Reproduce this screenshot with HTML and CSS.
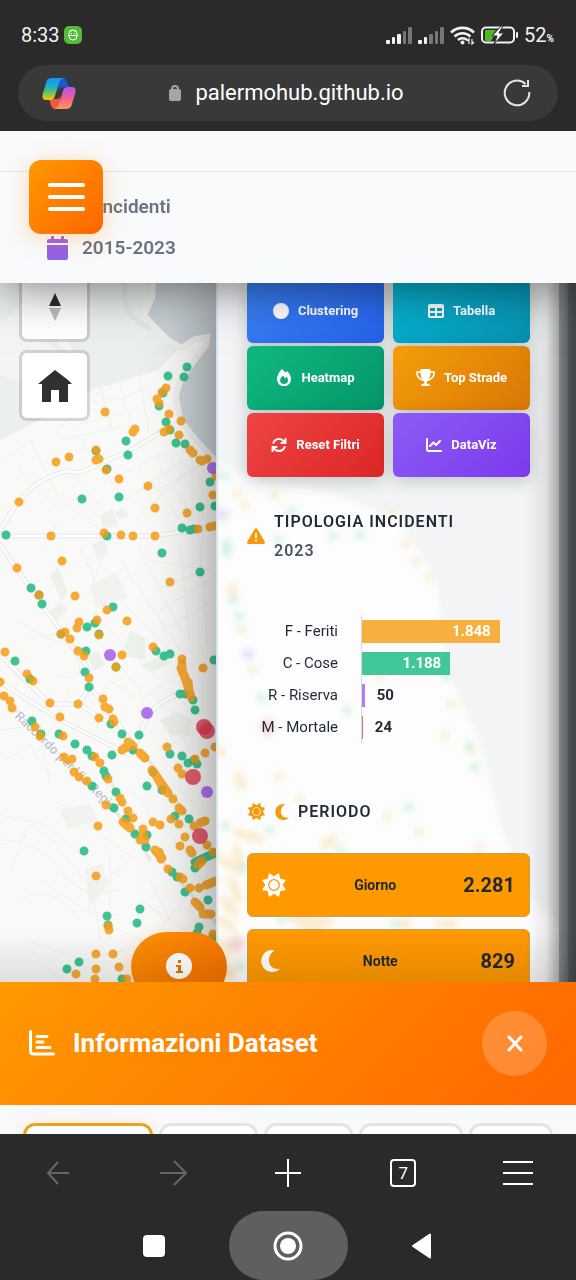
FILE: index.html
```html
<!DOCTYPE html>
<html lang="it">
<head>
<meta charset="utf-8">
<meta name="viewport" content="width=device-width, initial-scale=1">
<title>Palermo Hub - Incidenti</title>
<link rel="stylesheet" href="styles.css">
</head>
<body>
<div class="phone">
  <div class="browser-top">
    <div class="status">
      <span class="clock">8:33</span>
      <svg class="badge-app" width="18" height="18" viewBox="0 0 18 18"><rect width="18" height="18" rx="5" fill="#53bd3a"/><path d="M5 8a4 4 0 0 1 8 0v2a4 4 0 0 1-8 0zM4 9.500h10M6 4l1 1.500M12 4l-1 1.500M7 7.500h1M10 7.500h1" fill="none" stroke="#fff" stroke-width="1"/></svg>
      <span class="spacer"></span>
      <svg width="26" height="17" viewBox="0 0 26 17"><g fill="#f2f2f2"><rect y="13" width="4" height="4" rx="1"/><rect x="6" y="10" width="3" height="7" rx="1"/><rect x="11" y="7" width="4" height="10" rx="1"/></g><g fill="#777"><rect x="17" y="4" width="3" height="13" rx="1"/><rect x="22" width="4" height="17" rx="1"/></g></svg>
      <svg width="26" height="17" viewBox="0 0 26 17"><g fill="#f2f2f2"><rect y="13" width="4" height="4" rx="1"/><rect x="6" y="10" width="3" height="7" rx="1"/></g><g fill="#777"><rect x="11" y="7" width="4" height="10" rx="1"/><rect x="17" y="4" width="3" height="13" rx="1"/><rect x="22" width="4" height="17" rx="1"/></g></svg>
      <svg width="25" height="19" viewBox="0 0 25 19"><g fill="none" stroke="#f2f2f2" stroke-width="2.600"><path d="M1 6.500a16.500 16.500 0 0 1 23 0"/><path d="M4.500 10.500a11.500 11.500 0 0 1 16 0"/><path d="M8 14a6.500 6.500 0 0 1 9 0"/></g><circle cx="12.500" cy="16.500" r="2" fill="#f2f2f2"/><path d="M19 18v-5l-2 2M22 13v5l2-2" stroke="#f2f2f2" stroke-width="1.200" fill="none"/></svg>
      <svg width="37" height="18" viewBox="0 0 37 18"><rect x="1" y="1.500" width="32" height="15" rx="4" fill="none" stroke="#f2f2f2" stroke-width="2"/><path d="M5 4h10l-4 6h2l-3 5H5a1 1 0 0 1-1-1V5a1 1 0 0 1 1-1z" fill="#50b820"/><path d="M20 0l-9 10h5l-3 8 10-11h-5l4-7z" fill="#f2f2f2" stroke="#2a2a2a"/><rect x="35" y="6" width="2" height="6" rx="1" fill="#f2f2f2"/></svg>
      <span class="battery">52<small>%</small></span>
    </div>
    <div class="address">
      <svg width="34" height="31" viewBox="0 0 34 31">
        <defs>
          <linearGradient id="ca" x1="0" y1="0" x2="0" y2="1"><stop offset="0" stop-color="#1795ef"/><stop offset=".4" stop-color="#1db0c8"/><stop offset=".7" stop-color="#75c45c"/><stop offset="1" stop-color="#ffc400"/></linearGradient>
          <linearGradient id="cb" x1="0" y1="0" x2="0" y2="1"><stop offset="0" stop-color="#a95cf5"/><stop offset=".45" stop-color="#ee5aa0"/><stop offset="1" stop-color="#ff9a55"/></linearGradient>
        </defs>
        <path d="M15 0h6q3 0 4 4l2 5h-6q-3 0-4 4z" fill="#1b55d8"/>
        <path d="M19 31h-6q-3 0-4-4l-2-6h8q3 0 3-4z" fill="#ef5a3c"/>
        <path d="M10 0h12q-4 1-5 5l-4 13q-1 4-5 4H4q-5 0-3-7L4 5q1-5 6-5z" fill="url(#ca)"/>
        <path d="M24 31H12q4-1 5-5l4-13q1-4 5-4h4q5 0 3 7l-3 10q-1 5-6 5z" fill="url(#cb)"/>
      </svg>
      <div class="url">
        <svg width="12" height="16" viewBox="0 0 12 16"><path d="M3 6V4a3 3 0 0 1 6 0v2" fill="none" stroke="#a5a5a5" stroke-width="2"/><rect y="4" width="12" height="12" rx="2" fill="#a5a5a5"/></svg>
        <span>palermohub.github.io</span>
      </div>
      <button class="plain" aria-label="Ricarica"><svg width="28" height="28" viewBox="0 0 28 28" fill="none" stroke="#e6e6e6" stroke-width="2"><path d="M22.500 5A12.300 12.300 0 1 0 26.300 13M25 1v6h-6"/></svg></button>
    </div>
  </div>

  <header class="page-head">
    <div class="strip"></div>
    <div class="stats">
      <div class="stat stat-count">Incidenti</div>
      <div class="stat">
        <svg width="21" height="24" viewBox="0 0 21 24" fill="#9360e8"><path d="M0 7V5a2 2 0 0 1 2-2h2V1q0-1 1-1h1q1 0 1 1v2h7V1q0-1 1-1h1q1 0 1 1v2h2a2 2 0 0 1 2 2v2zM0 9h21v13a2 2 0 0 1-2 2H2a2 2 0 0 1-2-2z"/></svg>
        2015-2023
      </div>
    </div>
    <button class="menu" aria-label="Menu"><i></i><i></i><i></i></button>
  </header>

  <main class="stage">
    <svg class="map" viewBox="0 283 576 699" preserveAspectRatio="xMinYMin slice" fill="none" stroke-linecap="round">
      <rect y="283" width="576" height="699" fill="#f9faf8"/>
      <path d="M0 283H153L151 315 150 322 180 348 158 370 120 382 90 390 70 405 0 440Z" fill="#ebf0ec"/>
      <path d="M0 325l22-20 10 30 25 15-20 40L0 375zM40 290l20 55 20 20" fill="#f4f5f2"/>
      <path d="M125 283q-4 35 25 45" stroke="#e3e9e4" stroke-width="5"/>
      <path d="M153 283L152 298 144 315 150 322 168 340 182 348 195 339 207 337 206 345 196 358 186 372 179 384 176 396 180 420 196 440 217 462 260 480 330 492 400 520 437 580 447 670 480 740 500 820 522 890 576 940V283Z" fill="#cbd3d8"/>
      <path d="M153 283L152 298 144 315 150 322 168 340 182 348 195 339 207 337 206 345 196 358 186 372 179 384 176 396 180 420 196 440 217 462" stroke="#f1f1ef" stroke-width="6"/>
      <g fill="#edf1eb"><path d="M100 515l12-6 6 14-14 7zM115 512l8-4 6 7-10 4zM130 630l15 8 1 22-25-4zM88 655l10-4 7 14-12 6zM140 665l20-8 12 5-20 10zM160 720l18-8 14 8-2 16-20-1zM50 575l8-8 10 25-6 9zM92 545l12-6 4 13-10 8zM48 612l12-9 8 7-12 10z"/></g>
      <g fill="#f2f2f1"><path d="M90 585l26-13 12 25-32 12zM85 870l16-6 8 20-20 24zM60 810l30-6 8 16-30 10z"/></g>
      <g stroke="#eff0f0" stroke-width="1">
        <path d="M90 390l26 10 30-12M100 385l12 45M120 382l10 40M75 425l50-12M60 440l70-15M140 380l8 50M95 400l-40 30M30 440l30 60 40 30M60 460l60 70M80 440l45 60M110 480l60-30M125 500l60-40M140 515l55-50M150 480l30 40M160 470l30 40M170 460l30 40M150 495l50-30"/>
        <path d="M20 470l40 40 20-15 25 30M0 460l35-20M60 520l-20 30M80 550l20 40M110 540l-20 50M120 560l60 90M140 550l40 80M150 560l60 10M155 590l50-20M160 610l50-30M165 630l50-30M180 550l10 90M200 545l8 100M120 600l60 60M100 620l60 60M90 630l50 60M20 620q20 20 50 25t60 50M30 640q30-15 45 15t-20 20M140 700l60-40M150 690l40 40M160 750l60-30M100 700l50 60M110 680l40 30M70 690l-30 60M0 730l40-5 10 60M5 760l25-15 20 30"/>
        <path d="M0 840q40 0 60 30t60 20M10 870l20-45 30 20M40 880l60 40 40 20M20 900q30-20 60 20M60 850l40 50M70 910l50 5M90 870l10 70M110 850v90M130 860l-40 30M25 940l60 20 40-10M30 950l30 30M150 880l20 40M160 930l40-50M140 900l60 40M170 860l40 60M0 815l50 10 60 60"/>
        <path d="M55 800l80 60M140 770l50 50M150 760l50 50M160 745l50 50M130 790l70 80M180 730l30 70"/>
      </g>
      <g stroke="#e8e9e9" stroke-width="5"><path d="M0 536H155L217 526M0 530L18 502Q40 475 70 471 80 476 100 463L127 452 165 430M0 545L60 630 88 668 92 690 115 720 145 760M0 682L60 720 130 755M78 704L50 704 0 655M78 704L88 690M79 704L110 724M133 750L140 735Q150 700 185 693"/></g>
      <g stroke="#fcfcfb" stroke-width="3"><path d="M0 536H155L217 526M0 530L18 502Q40 475 70 471 80 476 100 463L127 452 165 430M0 545L60 630 88 668 92 690 115 720 145 760M0 682L60 720 130 755M78 704L50 704 0 655M78 704L88 690M79 704L110 724M133 750L140 735Q150 700 185 693"/></g>
      <path d="M0 694L90 785 170 870 217 925M105 770L150 860M145 755L217 860" stroke="#e8e9e9" stroke-width="3"/>
      <text class="road-label" transform="translate(14 717) rotate(44)">Raccordo per Via Regio</text>
      <g stroke-width="9" stroke-opacity=".85">
        <path stroke="#1fb980" d="M187 367h0M184 377h0M168 376h0M159 406h0M166 422h0M163 393h0M126 441h0M128 455h0M176 443h0M185 444h0M107 469h0M82 499h0M119 497h0M210 482h0M200 507h0M215 506h0M182 528h0M190 530h0M194 529h0M6 535h0M107 536h0M162 553h0M200 572h0M31 588h0M42 604h0M113 607h0M87 627h0M95 623h0M99 634h0M86 651h0M15 661h0M30 679h0M85 672h0M89 687h0M111 724h0M122 734h0M139 735h0M156 651h0M164 656h0M170 654h0M214 660h0M180 694h0M185 694h0M193 700h0M195 710h0M32 721h0M41 734h0M59 734h0M75 744h0M87 750h0M92 756h0M112 755h0M104 771h0M106 776h0M92 786h0M116 792h0M133 750h0M170 754h0M182 756h0M188 763h0M197 764h0M147 786h0M162 790h0M96 451h0M170 430h0M61 634h0M39 595h0"/>
        <path stroke="#1fb980" d="M114 808h0M126 819h0M135 834h0M147 835h0M146 847h0M84 851h0M175 816h0M189 819h0M172 872h0M177 877h0M185 892h0M195 862L215 853M195 868h0M208 900h0M140 909h0M137 923h0M107 916h0M199 927h0M79 962h0M67 969h0M122 979h0M108 925h0M197 933h0M213 937h0M153 772h0M116 667h0M194 760h0"/>
        <path stroke="#f79c14" d="M166 388h0M157 399h0M159 403h0M162 392h0M169 414h0M181 421h0M105 412h0M135 429h0M133 432h0M164 432h0M169 429h0M179 435h0M190 450h0M193 453h0M200 460h0M202 461h0M207 459h0M56 462h0M69 457h0M96 450h0M96 460h0M99 459h0M106 470h0M119 479h0M148 486h0M155 508h0M187 513h0M19 502h0M51 536h0M104 533h0M121 535h0M133 536h0M155 536h0M198 529h0M210 527h0M214 526h0M213 495h0M216 476h0M62 561h0M17 568h0M39 595h0M75 596h0M170 582h0M107 610h0M127 621h0M79 622h0M77 628h0M97 620h0M99 635h0M65 632h0M61 634h0M70 639h0M78 651h0M84 656h0M122 655h0M116 667h0M5 652h0M27 674h0M33 681h0M0 682h0M4 696h0M10 701h0M12 708h0M50 703h0M78 704h0M60 717h0M89 678h0M103 699h0M105 707h0M109 709h0M99 718h0M113 719h0M114 722h0M153 647h0M182 659h0M203 668h0"/>
        <path stroke="#f79c14" d="M181 668L186 680 191 697M188 682l1 10M182 664l0 6M35 727h0M40 736h0M63 736h0M64 757h0M68 760h0M72 759h0M74 772h0M79 777h0M87 781h0M95 757h0M100 763h0M108 779h0M122 750L131 744M128 742l5 4M140 753L145 758M152 770L168 793M157 777l8 14M173 799h0M120 798h0M167 747h0M205 753h0M215 747h0M195 759h0M178 768h0M182 774h0M122 802h0M106 805h0M128 811h0M133 818h0M123 822L130 828M143 829h0M143 834h0M140 840h0M145 840h0M98 826h0M153 822h0M160 825h0M155 850L162 858M159 852l2 7M168 869h0M183 879h0M180 877h0M190 888h0M199 888h0M96 876h0M179 808L182 811M171 819h0M179 824h0M194 826h0M200 823L205 821M185 837h0M180 846h0M190 850l2 3M207 845h0M213 852h0M198 865l4-4M206 885L216 881M195 902L200 907M203 914L211 914M108 926h0M109 930h0M96 954h0M113 954h0M96 969h0M119 967h0M76 974h0M95 979h0M127 979h0M213 934h0"/>
        <path stroke="#f79c14" d="M237 493h0M245 505h0M274 495h0M390 512h0M406 543h0M417 562h0M429 577h0M232 587l1 6M242 630h0M253 670h0M380 677h0M451 704h0M445 735h0M472 750h0M238 776l4 10M279 777h0M222 752h0M300 799h0M387 817h0M419 832h0M480 848h0M238 833l22 6M325 845l8-6M232 880l6 20M220 920l12 8M330 922l-40-6M300 925l20 4M400 924h8M440 924h14M266 855l4 10M257 813h0M222 860l14 8M224 900l10 14M236 850l6 20M226 945l8 4M222 972h10"/>
        <path stroke="#1fb980" d="M225 476h0M292 511h0M333 536h0M360 535h0M279 540h0M227 543l0 10M233 600h0M239 617h0M261 698h0M347 710h0M446 676h0M469 746h0M475 767h0M409 807h0M225 826h0M270 830h0M340 850h0M243 868h0M395 924h0M240 965h0M282 920h0"/>
      </g>
      <g fill="#a35cf0" fill-opacity=".85"><circle cx="213" cy="468" r="6"/><circle cx="110" cy="655" r="6"/><circle cx="147" cy="713" r="6"/><circle cx="207" cy="792" r="6"/><circle cx="223" cy="515" r="6"/><circle cx="248" cy="654" r="6"/></g>
      <g fill="#e23d50" fill-opacity=".82"><circle cx="204" cy="727" r="8"/><circle cx="207" cy="731" r="8"/><circle cx="193" cy="777" r="8"/><circle cx="200" cy="836" r="8"/><circle cx="268" cy="727" r="8"/><circle cx="237" cy="943" r="8"/></g>
    </svg>

    <div class="map-tools">
      <button class="tool" aria-label="Nord"><svg width="12" height="28" viewBox="0 0 12 28"><path d="M6 0l6 13H0z" fill="#2f2f2f"/><path d="M6 28l6-13H0z" fill="#bdbdbd"/></svg></button>
      <button class="tool" aria-label="Home"><svg width="34" height="32" viewBox="0 0 34 32"><path d="M17 0L0 14h4v18h9V20h8v12h9V14h4l-4-4z" fill="#303030"/></svg></button>
    </div>

    <aside class="panel">
      <div class="actions">
        <button class="act blue"><svg width="16" height="16" viewBox="0 0 16 16"><circle cx="8" cy="8" r="8" fill="#fff"/></svg>Clustering</button>
        <button class="act cyan"><svg width="16" height="16" viewBox="0 0 512 512"><path fill="#fff" d="M64 256V160H224v96H64zm0 64H224v96H64V320zm224 96V320H448v96H288zM448 256H288V160H448v96zM64 32C28.700 32 0 60.700 0 96V416c0 35.300 28.700 64 64 64H448c35.300 0 64-28.700 64-64V96c0-35.300-28.700-64-64-64H64z"/></svg>Tabella</button>
        <button class="act green"><svg width="16" height="17" viewBox="0 0 16 17"><path fill="#fff" fill-rule="evenodd" d="M6 0q2 1.500 3.500 3.700L11 2q4 4 4 8a7 7 0 0 1-14 .500Q1 5 6 0zM8 15q4 0 4-4 0-2-1.300-3.300L9.200 9.500 7 6.500Q4 9 4 11.300 4.300 15 8 15z"/></svg>Heatmap</button>
        <button class="act amber"><svg width="19" height="17" viewBox="0 0 576 512"><path fill="#fff" d="M400 0H176c-26.500 0-48.100 21.800-47.100 48.200c.2 5.300 .4 10.600 .7 15.800H24C10.700 64 0 74.700 0 88c0 92.600 33.500 157 78.500 200.700c44.300 43.100 98.300 64.800 138.100 75.800c23.400 6.500 39.400 26 39.400 45.600c0 20.900-17 37.900-37.900 37.900H192c-17.700 0-32 14.300-32 32s14.300 32 32 32H384c17.700 0 32-14.300 32-32s-14.300-32-32-32H357.900C337 448 320 431 320 410.100c0-19.600 15.900-39.200 39.400-45.600c39.900-11 93.900-32.700 138.200-75.800C542.500 245 576 180.600 576 88c0-13.300-10.700-24-24-24H446.400c.3-5.200 .5-10.400 .7-15.800C448.100 21.800 426.500 0 400 0zM48.900 112h84.400c9.100 90.100 29.200 150.300 51.900 190.600c-24.900-11-50.800-26.500-73.200-48.300c-32-31.100-58-76-63-142.300zM464.100 254.300c-22.400 21.800-48.300 37.300-73.200 48.300c22.700-40.300 42.800-100.500 51.900-190.600h84.400c-5.100 66.300-31.100 111.200-63 142.300z"/></svg>Top Strade</button>
        <button class="act red"><svg width="16" height="16" viewBox="0 0 512 512"><path fill="#fff" d="M105.100 202.600c7.700-21.800 20.200-42.300 37.800-59.800c62.500-62.500 163.800-62.500 226.300 0L386.300 160H336c-17.700 0-32 14.300-32 32s14.300 32 32 32H463.900c17.700 0 32-14.300 32-32V64c0-17.700-14.300-32-32-32s-32 14.300-32 32v51.200L414.400 97.600c-87.500-87.500-229.300-87.500-316.800 0C73.200 122 55.600 150.700 44.800 181.400c-5.900 16.700 2.900 34.900 19.500 40.800s34.900-2.900 40.800-19.500zM39 289.300c-5 1.500-9.800 4.200-13.700 8.200c-4 4-6.700 8.800-8.100 14c-.3 1.200-.6 2.500-.8 3.800c-.3 1.700-.4 3.400-.4 5.100V448c0 17.700 14.300 32 32 32s32-14.300 32-32V396.900l17.600 17.500c87.500 87.400 229.300 87.400 316.700 0c24.400-24.400 42.100-53.100 52.900-83.700c5.900-16.700-2.900-34.900-19.500-40.800s-34.900 2.900-40.800 19.500c-7.700 21.800-20.200 42.300-37.800 59.800c-62.500 62.500-163.800 62.500-226.300 0L125.600 352H176c17.700 0 32-14.300 32-32s-14.300-32-32-32H48.400c-1.600 0-3.200 .1-4.800 .3s-3.100 .5-4.600 1z"/></svg>Reset Filtri</button>
        <button class="act violet"><svg width="16" height="16" viewBox="0 0 512 512"><path fill="#fff" d="M64 64c0-17.700-14.300-32-32-32S0 46.300 0 64V400c0 44.200 35.800 80 80 80H480c17.700 0 32-14.300 32-32s-14.300-32-32-32H80c-8.800 0-16-7.200-16-16V64zm406.600 86.600c12.500-12.500 12.500-32.800 0-45.300s-32.800-12.500-45.300 0L320 210.700l-57.400-57.400c-12.500-12.500-32.800-12.500-45.300 0l-112 112c-12.500 12.500-12.500 32.800 0 45.300s32.800 12.500 45.300 0L240 221.300l57.400 57.400c12.500 12.500 32.800 12.500 45.300 0l128-128z"/></svg>DataViz</button>
      </div>

      <h2 class="title title-type">
        <svg width="18" height="18" viewBox="0 0 512 512"><path fill="#f59a0c" d="M256 32c14.200 0 27.300 7.500 34.500 19.800l216 368c7.300 12.400 7.300 27.700 .2 40.100S486.300 480 472 480H40c-14.300 0-27.600-7.700-34.700-20.100s-7-27.800 .2-40.100l216-368C228.700 39.500 241.800 32 256 32zm0 128c-13.300 0-24 10.700-24 24V296c0 13.300 10.700 24 24 24s24-10.700 24-24V184c0-13.300-10.700-24-24-24zm32 224a32 32 0 1 0 -64 0 32 32 0 1 0 64 0z"/></svg>
        <span>TIPOLOGIA INCIDENTI<br><span class="year">2023</span></span>
      </h2>

      <div class="chart">
        <div class="row"><span class="label">F - Feriti</span><div class="track"><div class="bar orange" style="width:82.1%"><b>1.848</b></div></div></div>
        <div class="row"><span class="label">C - Cose</span><div class="track"><div class="bar teal" style="width:52.8%"><b>1.188</b></div></div></div>
        <div class="row"><span class="label">R - Riserva</span><div class="track"><div class="bar purple" style="width:2.2%"></div><b>50</b></div></div>
        <div class="row"><span class="label">M - Mortale</span><div class="track"><div class="bar rose" style="width:1.1%"></div><b>24</b></div></div>
      </div>

      <h2 class="title title-period">
        <svg width="19" height="19" viewBox="0 0 24 24"><path fill="#f59a0c" fill-rule="evenodd" d="M16.600 1l1.100 5.300L23 7.400 20 12l3 4.600-5.300 1.100L16.600 23 12 20l-4.600 3-1.100-5.300L1 16.600 4 12 1 7.400l5.300-1.100L7.400 1 12 4zM12 6.500a5.500 5.500 0 1 0 0 11 5.500 5.500 0 0 0 0-11zm0 1.200a4.300 4.300 0 1 1 0 8.600 4.300 4.300 0 0 1 0-8.600z"/></svg>
        <svg width="14" height="16" viewBox="0 0 18 21"><path fill="#f59a0c" d="M10.500 0A10.500 10.500 0 1 0 18 18Q9 19 7.500 11 7 4 13 .500 12 0 10.500 0z"/></svg>
        PERIODO
      </h2>
      <div class="periods">
        <button class="period"><svg width="26" height="26" viewBox="0 0 24 24"><path fill="#fff" fill-rule="evenodd" d="M16.600 1l1.100 5.300L23 7.400 20 12l3 4.600-5.300 1.100L16.600 23 12 20l-4.600 3-1.100-5.300L1 16.600 4 12 1 7.400l5.300-1.100L7.400 1 12 4zM12 6.500a5.500 5.500 0 1 0 0 11 5.500 5.500 0 0 0 0-11zm0 1.200a4.300 4.300 0 1 1 0 8.600 4.300 4.300 0 0 1 0-8.600z"/></svg><span>Giorno</span><strong>2.281</strong></button>
        <button class="period"><svg width="19" height="22" viewBox="0 0 18 21"><path fill="#fff" d="M10.500 0A10.500 10.500 0 1 0 18 18Q9 19 7.500 11 7 4 13 .500 12 0 10.500 0z"/></svg><span>Notte</span><strong>829</strong></button>
      </div>
    </aside>
    <div class="edge"></div>
    <button class="info-pill" aria-label="Informazioni"><svg width="26" height="26" viewBox="0 0 26 26"><circle cx="13" cy="13" r="13" fill="#fff"/><path d="M12 7h3v3h-3zM10 12h5v6h2v2h-7v-2h2v-4h-2z" fill="#e87400"/></svg></button>
    <div class="shade"></div>
  </main>

  <section class="dataset">
    <h1><svg width="26" height="26" viewBox="0 0 26 26" fill="none" stroke="#fff" stroke-width="3" stroke-linecap="round"><path d="M1.500 1.500V21q0 3 3 3H24.500M8 6.500h10M8 12h6M8 17.500h13"/></svg>Informazioni Dataset</h1>
    <button class="close" aria-label="Chiudi"><svg width="16" height="17" viewBox="0 0 16 17"><path d="M2 2l12 13M14 2L2 15" stroke="#fff" stroke-width="3" stroke-linecap="round"/></svg></button>
  </section>
  <div class="tabs">
    <button class="tab active" aria-label="Scheda 1"></button>
    <button class="tab t2" aria-label="Scheda 2"></button>
    <button class="tab t3" aria-label="Scheda 3"></button>
    <button class="tab t4" aria-label="Scheda 4"></button>
    <button class="tab t5" aria-label="Scheda 5"></button>
  </div>

  <nav class="browser-nav">
    <button class="plain" aria-label="Indietro"><svg width="24" height="24" viewBox="0 0 24 24" fill="none" stroke="#666" stroke-width="2"><path d="M23 12H2M12 1L2 12l10 11"/></svg></button>
    <button class="plain" aria-label="Avanti"><svg width="28" height="26" viewBox="0 0 28 26" fill="none" stroke="#666" stroke-width="2"><path d="M1 13h26M15 1l12 12-12 12"/></svg></button>
    <button class="plain" aria-label="Nuova scheda"><svg width="28" height="28" viewBox="0 0 28 28" stroke="#fff" stroke-width="2"><path d="M14 0v28M1 14h26"/></svg></button>
    <button class="plain count" aria-label="Schede">7</button>
    <button class="plain" aria-label="Menu browser"><svg width="30" height="26" viewBox="0 0 30 26" stroke="#fff" stroke-width="2"><path d="M0 2h30M0 13h30M0 24h30"/></svg></button>
  </nav>
  <nav class="system-nav">
    <button class="plain" aria-label="Recenti"><svg width="22" height="22" viewBox="0 0 22 22"><rect width="22" height="22" rx="4" fill="#fff"/></svg></button>
    <button class="plain home" aria-label="Home"><svg width="30" height="30" viewBox="0 0 30 30"><circle cx="15" cy="15" r="13" fill="none" stroke="#fff" stroke-width="3"/><circle cx="15" cy="15" r="8" fill="#fff"/></svg></button>
    <button class="plain" aria-label="Indietro sistema"><svg width="20" height="26" viewBox="0 0 20 26"><path d="M18 1.500v23L1 13z" fill="#fff" stroke="#fff" stroke-width="2" stroke-linejoin="round"/></svg></button>
  </nav>
</div>
</body>
</html>
```
FILE: styles.css
```css
* { box-sizing: border-box; }
body { margin: 0; font-family: Roboto, "Liberation Sans", sans-serif; color: #1f2937; background: #2a2a2a; }
button { font: inherit; color: inherit; border: 0; padding: 0; margin: 0; background: none; cursor: pointer; }
svg { display: block; flex: none; }
h1, h2 { margin: 0; }

.phone { display: flex; flex-direction: column; min-height: 100vh; overflow: hidden; }
.plain { display: flex; align-items: center; justify-content: center; }

.browser-top { position: relative; z-index: 4; background: #2a2a2a; padding: 22px 18px 10px; color: #f2f2f2; }
.status { display: flex; align-items: center; gap: 6px; height: 26px; padding: 0 4px 0 3px; font-size: 20px; }
.badge-app { margin-left: -2px; }
.spacer { flex: 1; }
.battery small { font-size: 10px; font-weight: 700; }
.address { display: flex; align-items: center; justify-content: space-between; height: 56px; margin-top: 17px; padding: 0 27px 0 24px; border-radius: 28px; background: #393939; }
.url { display: flex; align-items: center; gap: 14px; margin-right: 6px; font-size: 22px; line-height: 28px; color: #fff; }

.page-head { position: relative; z-index: 3; height: 152px; background: #f9fafc; box-shadow: 0 6px 44px rgba(0, 0, 0, .5); }
.strip { height: 41px; border-bottom: 1px solid #e3e6ea; }
.stats { display: flex; flex-direction: column; gap: 17px; padding: 23px 47px 0; color: #6b7280; font-size: 19px; font-weight: 600; line-height: 24px; }
.stat { display: flex; align-items: center; gap: 14px; }
.stat-count { padding-left: 50px; }
.menu { position: absolute; left: 29px; top: 29px; width: 74px; height: 74px; border-radius: 12px; display: flex; flex-direction: column; align-items: center; justify-content: center; gap: 8px; background: linear-gradient(135deg, #ff9800, #ff6600); box-shadow: 0 4px 24px rgba(255, 140, 0, .3); }
.menu i { width: 37px; height: 4px; border-radius: 2px; background: #fff; }

.stage { position: relative; flex: 1 0 699px; display: flex; justify-content: flex-end; overflow: hidden; background: #f9faf8; }
.map { position: absolute; inset: 0; width: 100%; height: 100%; }
.road-label { font: 500 13px Roboto, sans-serif; fill: #bcc3cc; stroke: #fff; stroke-width: 2px; paint-order: stroke; }
.map-tools { position: absolute; left: 19px; top: -12px; display: flex; flex-direction: column; gap: 8px; }
.tool { width: 71px; height: 71px; display: flex; align-items: center; justify-content: center; background: #fff; background-clip: padding-box; border: 3px solid rgba(0, 0, 0, .14); border-radius: 8px; }

.panel { position: relative; flex: 0 1 62.5%; padding: 0 46px 0 29px; border-left: 2px solid #d8e4ec; background: rgba(253, 254, 253, .78); backdrop-filter: blur(3px); box-shadow: -4px 0 60px rgba(0, 0, 0, .42); }
.actions { display: grid; grid-template-columns: 1fr 1fr; gap: 3px 9px; margin-top: -4px; }
.act { height: 64px; padding-bottom: 1px; border-radius: 6px; display: flex; align-items: center; justify-content: center; gap: 9px; color: #fff; font-size: 13px; font-weight: 700; box-shadow: 0 4px 18px rgba(0, 0, 0, .2); }
.blue { background: linear-gradient(135deg, #3b82f6, #2563eb); }
.cyan { background: linear-gradient(135deg, #06b6d4, #0891b2); }
.green { background: linear-gradient(135deg, #10b981, #059669); }
.amber { background: linear-gradient(135deg, #f59e0b, #d97706); }
.red { background: linear-gradient(135deg, #ef4444, #dc2626); }
.violet { background: linear-gradient(135deg, #8b5cf6, #7c3aed); }

.title { display: flex; align-items: center; gap: 9px; font-size: 16px; font-weight: 600; letter-spacing: 1px; line-height: 29px; color: #1f2937; }
.title-type { margin-top: 30px; }
.year { color: #4b5563; }
.chart { position: relative; margin-top: 50px; }
.chart::before { content: ""; position: absolute; left: 114px; top: 0; bottom: 0; width: 1px; background: #d5d8dc; }
.row { display: flex; align-items: center; gap: 23px; height: 32px; font-size: 15px; }
.label { flex: 0 0 91px; display: flex; justify-content: flex-end; white-space: nowrap; }
.track { flex: 1; display: flex; align-items: center; gap: 12px; }
.track b { font-weight: 700; }
.bar { flex: none; height: 23px; display: flex; align-items: center; justify-content: flex-end; color: #fff; }
.bar b { padding-right: 9px; }
.orange { background: #f7b03e; }
.teal { background: #41c798; }
.purple { background: #b77df0; }
.rose { background: #e8707c; }
.title-period { margin-top: 54px; }
.periods { display: flex; flex-direction: column; gap: 12px; margin-top: 27px; }
.period { display: flex; align-items: center; justify-content: space-between; height: 64px; padding: 0 14px 0 13px; border: 1px solid #c5a05a; border-radius: 6px; background: #ff9900; font-size: 14px; font-weight: 700; }
.period strong { font-size: 20px; font-weight: 700; }

.edge { position: absolute; right: 0; top: 0; bottom: 0; width: 50px; background: linear-gradient(90deg, rgba(60, 60, 60, 0), rgba(60, 60, 60, .1) 40%, rgba(60, 60, 60, .42) 66%, #7d8285 66%, #61666a 82%, #4b4f52 86%, #424548); }
.info-pill { position: absolute; left: 131px; bottom: -20px; width: 96px; height: 70px; border-radius: 36px; background: linear-gradient(135deg, #ff9100, #f26a00); box-shadow: 0 4px 20px rgba(255, 140, 0, .25); display: flex; justify-content: center; padding-top: 21px; }
.shade { position: absolute; inset: auto 0 0; height: 50px; background: linear-gradient(rgba(0, 0, 0, 0), rgba(0, 0, 0, .1)); pointer-events: none; }

.dataset { position: relative; display: flex; align-items: center; justify-content: space-between; height: 123px; padding: 0 29px 1px; background: linear-gradient(135deg, #ff9900, #ff6600); color: #fff; }
.dataset h1 { display: flex; align-items: center; gap: 18px; font-size: 26px; font-weight: 700; }
.close { width: 65px; height: 65px; border-radius: 50%; background: rgba(255, 255, 255, .2); display: flex; align-items: center; justify-content: center; }
.tabs { display: flex; gap: 6px; height: 29px; padding: 18px 23px 0; overflow: hidden; background: #f8f9fb; }
.tab { flex: 132 1 0; height: 50px; border: 3px solid #e3e4e9; border-radius: 12px; background: #fff; }
.active { border-color: #eba21c; box-shadow: 0 2px 14px rgba(255, 150, 0, .2); }
.t2 { flex-grow: 99; }
.t3 { flex-grow: 88; }
.t4 { flex-grow: 104; }
.t5 { flex-grow: 83; }

.browser-nav { display: grid; grid-template-columns: repeat(5, 1fr); height: 77px; background: #2a2a2a; }
.browser-nav .plain { color: #fff; }
.browser-nav .count { place-self: center; width: 26px; height: 28px; border: 2px solid #fff; border-radius: 4px; font-size: 17px; }
.system-nav { display: flex; align-items: center; justify-content: center; gap: 64px; height: 69px; padding-right: 2px; background: #2a2a2a; }
.system-nav .home { width: 119px; height: 69px; border-radius: 35px; background: #5f5f5f; }
```
